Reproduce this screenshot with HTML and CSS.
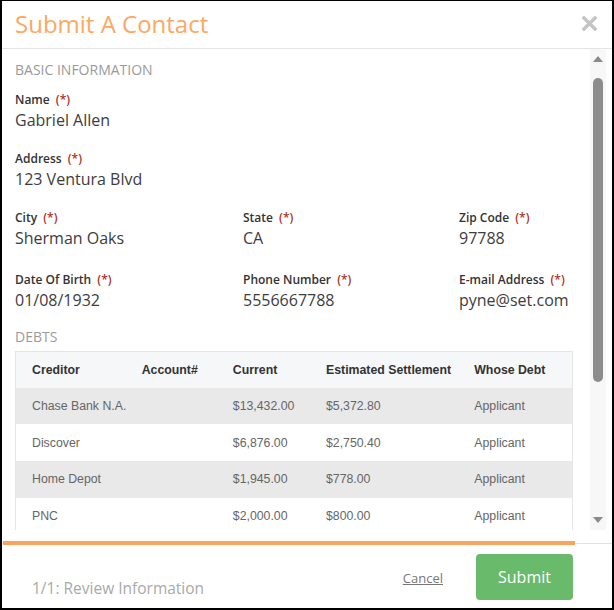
FILE: index.html
```html
<!DOCTYPE html>
<html lang="en">
<head>
    <meta charset="UTF-8">
    <title>Submit A Contact</title>
    <link rel="stylesheet" href="styles.css">
</head>
<body>
    <div class="dialog">
        <div class="dialog-header">
            <h1 class="dialog-title">Submit A Contact</h1>
            <button class="close-btn" aria-label="Close">
                <svg width="15" height="15" viewBox="0 0 15 15"><path d="M2 2L13 13M13 2L2 13" stroke="#c4c4c4" stroke-width="3.4" stroke-linecap="square"/></svg>
            </button>
        </div>
        <div class="dialog-body">
            <div class="scroll-content">
                <h2 class="section-title">Basic Information</h2>
                <div class="field">
                    <div class="field-label">Name <span class="req">(*)</span></div>
                    <div class="field-value">Gabriel Allen</div>
                </div>
                <div class="field">
                    <div class="field-label">Address <span class="req">(*)</span></div>
                    <div class="field-value">123 Ventura Blvd</div>
                </div>
                <div class="field-grid">
                    <div class="field">
                        <div class="field-label">City <span class="req">(*)</span></div>
                        <div class="field-value">Sherman Oaks</div>
                    </div>
                    <div class="field">
                        <div class="field-label">State <span class="req">(*)</span></div>
                        <div class="field-value">CA</div>
                    </div>
                    <div class="field">
                        <div class="field-label">Zip Code <span class="req">(*)</span></div>
                        <div class="field-value">97788</div>
                    </div>
                    <div class="field">
                        <div class="field-label">Date Of Birth <span class="req">(*)</span></div>
                        <div class="field-value">01/08/1932</div>
                    </div>
                    <div class="field">
                        <div class="field-label">Phone Number <span class="req">(*)</span></div>
                        <div class="field-value">5556667788</div>
                    </div>
                    <div class="field">
                        <div class="field-label">E-mail Address <span class="req">(*)</span></div>
                        <div class="field-value">pyne@set.com</div>
                    </div>
                </div>
                <h2 class="section-title debts-title">Debts</h2>
                <table class="debts">
                    <colgroup>
                        <col style="width:110px"><col style="width:91px"><col style="width:93px"><col style="width:148px"><col style="width:114px">
                    </colgroup>
                    <thead>
                        <tr><th>Creditor</th><th>Account#</th><th>Current</th><th>Estimated Settlement</th><th>Whose Debt</th></tr>
                    </thead>
                    <tbody>
                        <tr><td>Chase Bank N.A.</td><td></td><td>$13,432.00</td><td>$5,372.80</td><td>Applicant</td></tr>
                        <tr><td>Discover</td><td></td><td>$6,876.00</td><td>$2,750.40</td><td>Applicant</td></tr>
                        <tr><td>Home Depot</td><td></td><td>$1,945.00</td><td>$778.00</td><td>Applicant</td></tr>
                        <tr><td>PNC</td><td></td><td>$2,000.00</td><td>$800.00</td><td>Applicant</td></tr>
                    </tbody>
                </table>
            </div>
            <div class="scrollbar">
                <span class="arrow arrow-up"></span>
                <div class="track"><div class="thumb"></div></div>
                <span class="arrow arrow-down"></span>
            </div>
        </div>
        <div class="progress"><div class="progress-fill"></div></div>
        <div class="dialog-footer">
            <span class="step">1/1: Review Information</span>
            <a class="cancel-link" href="#">Cancel</a>
            <button class="submit-btn">Submit</button>
        </div>
    </div>
</body>
</html>
```
FILE: styles.css
```css
* { box-sizing: border-box; }
html, body { margin: 0; padding: 0; background: #fff; }
body { font-family: "Open Sans", Arial, sans-serif; }

.dialog { width: 614px; height: 610px; border-style: solid; border-color: #000; border-width: 1px 2px 2px 2px; background: #fff; display: flex; flex-direction: column; }

.dialog-header { height: 48px; flex: none; border-bottom: 1px solid #e4e4e4; display: flex; align-items: center; justify-content: space-between; padding: 0 15px 2px 13px; }
.dialog-title { margin: 0; font-size: 24px; font-weight: 400; color: #fca862; line-height: 30px; }
.close-btn { border: none; background: none; padding: 0; margin: 0; display: flex; cursor: pointer; }

.dialog-body { height: 481px; flex: none; display: flex; padding-right: 6px; overflow: hidden; }
.scroll-content { flex: 1; overflow: hidden; padding: 11px 17px 0 13px; }

.section-title { margin: 0 0 11px; font-size: 14px; font-weight: 400; line-height: 20px; text-transform: uppercase; color: #9a9a9a; }
.debts-title { margin: 15px 0 4px; }

.field { margin-bottom: 18px; }
.field-label { font-size: 12px; font-weight: 600; line-height: 17px; color: #333; }
.req { color: #b0321e; margin-left: 3px; }
.field-value { font-size: 16px; line-height: 24px; color: #3d3d3d; }

.field-grid { display: grid; grid-template-columns: 228px 216px 1fr; row-gap: 3px; }
.field-grid .field:nth-child(n+4) { margin-bottom: 0; }

.debts { width: 558px; border-collapse: collapse; table-layout: fixed; border: 1px solid #e6e6e6; font-family: "Liberation Sans", Arial, sans-serif; font-size: 12.3px; }
.debts th { height: 36px; text-align: left; font-weight: 700; color: #333; background: #f6f7f9; padding: 0 0 0 16px; white-space: nowrap; }
.debts td { height: 36.8px; color: #666; padding: 0 0 0 16px; white-space: nowrap; }
.debts tbody tr:nth-child(odd) td { background: #e9e9e9; }

.scrollbar { width: 16px; flex: none; background: #f7f7f7; display: flex; flex-direction: column; align-items: center; padding: 7px 0; }
.arrow { width: 0; height: 0; border-left: 5px solid transparent; border-right: 5px solid transparent; flex: none; }
.arrow-up { border-bottom: 6px solid #8a8a8a; }
.arrow-down { border-top: 6px solid #8a8a8a; }
.track { flex: 1; width: 10px; padding-top: 16px; }
.thumb { height: 304px; width: 10px; border-radius: 5px; background: #8c8c8c; }

.progress { margin-top: 11px; height: 4px; flex: none; background: linear-gradient(#e2e2e2, #e2e2e2) no-repeat center / 100% 1px; padding-left: 1px; }
.progress-fill { width: 572px; height: 4px; background: #fba35c; }

.dialog-footer { flex: 1; display: flex; align-items: flex-start; padding: 9px 39px 0 30px; }
.step { font-size: 15.5px; line-height: 22px; color: #a9a9a9; margin-top: 23px; flex: 1; }
.cancel-link { font-size: 13px; color: #777; text-decoration: underline; margin-top: 14px; margin-right: 33px; line-height: 20px; }
.submit-btn { width: 97px; height: 46px; border: none; border-radius: 4px; background: #6aba6b; color: #fff; font-family: "Open Sans", Arial, sans-serif; font-size: 16px; cursor: pointer; }
```
